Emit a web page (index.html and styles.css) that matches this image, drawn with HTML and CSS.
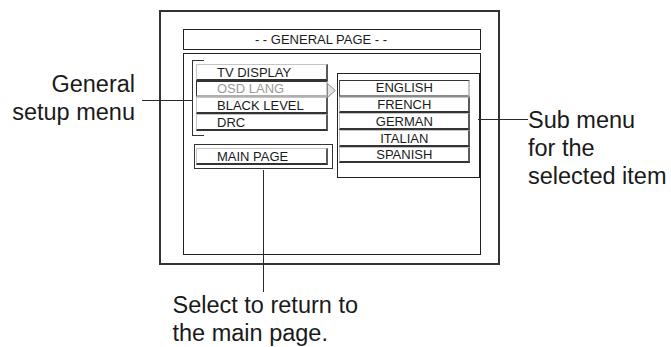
FILE: index.html
```html
<!DOCTYPE html>
<html lang="en">
<head>
<meta charset="utf-8">
<title>General setup page</title>
<link rel="stylesheet" href="styles.css">
</head>
<body>
<div class="figure">
  <div class="screen">
    <div class="title">- - GENERAL PAGE - -</div>
    <div class="panel">
      <div class="left-col">
        <div class="menu-group">
          <div class="item">TV DISPLAY</div>
          <div class="item item-selected">OSD LANG<svg class="pointer" width="9" height="15" viewBox="0 0 9 15"><path d="M0.5 0.5 L8.3 7.5 L0.5 14.5 Z" fill="#e2e2e2" stroke="#8a8a8a" stroke-width="1"/></svg></div>
          <div class="item">BLACK LEVEL</div>
          <div class="item">DRC</div>
        </div>
        <div class="main-box">
          <div class="item">MAIN PAGE</div>
        </div>
      </div>
      <div class="sub-box">
        <div class="sub-item sub-active">ENGLISH</div>
        <div class="sub-item">FRENCH</div>
        <div class="sub-item">GERMAN</div>
        <div class="sub-item">ITALIAN</div>
        <div class="sub-item">SPANISH</div>
      </div>
    </div>
  </div>

  <div class="callout callout-general">General<br>setup menu</div>
  <div class="leader leader-general"></div>

  <div class="callout callout-sub">Sub menu<br>for the<br>selected item</div>
  <div class="leader leader-sub"></div>

  <div class="callout callout-main">Select to return to<br>the main page.</div>
  <div class="leader leader-main"></div>
</div>
</body>
</html>
```

FILE: styles.css
```css
html, body {
  margin: 0;
  padding: 0;
  background: #ffffff;
}

body {
  width: 671px;
  height: 347px;
  overflow: hidden;
  font-family: "Liberation Sans", Arial, Helvetica, sans-serif;
  color: #1a1a1a;
}

.figure {
  position: relative;
  height: 337px;
  padding: 10px 0 0 159px;
}

.screen {
  box-sizing: border-box;
  width: 341px;
  height: 255px;
  border: 2px solid #333;
  padding: 17px 17px 8px 22px;
  display: flex;
  flex-direction: column;
  gap: 3px;
}

.title {
  box-sizing: border-box;
  height: 21px;
  border: 1px solid #222;
  font-size: 13px;
  line-height: 18px;
  padding: 1px 22px 0 0;
  text-align: center;
  color: #1a1a1a;
}

.panel {
  flex: 1;
  border: 1px solid #222;
  display: flex;
  align-items: flex-start;
  padding-left: 8px;
}

.left-col {
  width: 141px;
  margin-top: 6px;
  display: flex;
  flex-direction: column;
}

.menu-group {
  position: relative;
  border-left: 1px solid #333;
  padding: 4px 0 5px 3px;
  display: flex;
  flex-direction: column;
}

.menu-group::before,
.menu-group::after {
  content: "";
  position: absolute;
  left: -1px;
  width: 12px;
  height: 1px;
  background: #333;
}

.menu-group::before { top: 0; }
.menu-group::after { bottom: 0; }

.item {
  position: relative;
  box-sizing: border-box;
  width: 132px;
  height: 16.7px;
  border-top: 1px solid #c4c4c4;
  border-left: 1px solid #c4c4c4;
  border-right: 2px solid #5a5a5a;
  border-bottom: 2px solid #333;
  background: #fff;
  padding: 0.5px 0 0 20px;
  font-size: 13px;
  line-height: 13px;
  white-space: nowrap;
  color: #1a1a1a;
}

.item-selected {
  color: #9a9a9a;
  border-top-color: #333;
  border-left-color: #333;
  border-right-color: #c4c4c4;
  border-bottom-color: #b0b0b0;
}

.pointer {
  position: absolute;
  left: calc(100% + 0.5px);
  top: 1.5px;
  display: block;
}

.main-box {
  box-sizing: border-box;
  width: 139px;
  height: 25.5px;
  margin: 8px 0 0 1.5px;
  border: 1px solid #333;
  padding: 3.3px 0 0 1.5px;
}

.sub-box {
  box-sizing: border-box;
  width: 142.5px;
  height: 104.5px;
  margin: 19.3px 0 0 4px;
  border: 1px solid #222;
  padding: 5.7px 0 0 1.3px;
  display: flex;
  flex-direction: column;
}

.sub-item {
  box-sizing: border-box;
  width: 131px;
  height: 16.7px;
  border-top: 1px solid #c4c4c4;
  border-left: 1px solid #c4c4c4;
  border-right: 2px solid #5a5a5a;
  border-bottom: 2px solid #333;
  background: #fff;
  padding-top: 0.5px;
  font-size: 13px;
  line-height: 13px;
  text-align: center;
  color: #1a1a1a;
}

.sub-active {
  border-top-color: #333;
  border-left-color: #555;
  border-right-color: #c4c4c4;
  border-bottom-color: #8a8a8a;
}

.callout {
  position: absolute;
  font-size: 23.5px;
  line-height: 28px;
  color: #1a1a1a;
  white-space: nowrap;
}

.callout-general {
  right: 536px;
  top: 70px;
  text-align: right;
}

.callout-sub {
  left: 528px;
  top: 106px;
}

.callout-main {
  left: 172.5px;
  top: 291px;
}

.leader {
  position: absolute;
  background: #2a2a2a;
}

.leader-general {
  left: 142px;
  top: 100px;
  width: 49.5px;
  height: 1px;
}

.leader-sub {
  left: 478px;
  top: 119px;
  width: 50px;
  height: 1px;
}

.leader-main {
  left: 263px;
  top: 169.5px;
  width: 1px;
  height: 122px;
}
```
